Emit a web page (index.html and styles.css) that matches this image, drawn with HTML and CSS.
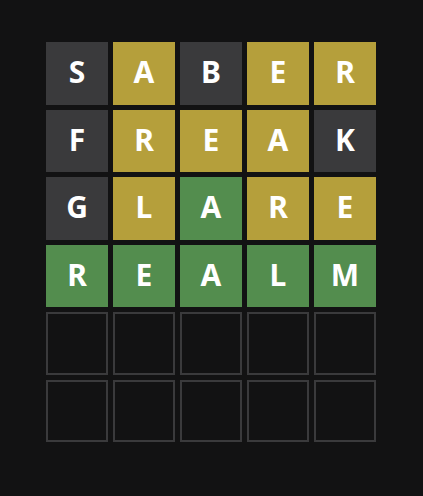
FILE: index.html
```html
<!DOCTYPE html>
<html lang="en">
<head>
<meta charset="utf-8">
<title>Wordle</title>
<link rel="stylesheet" href="styles.css">
</head>
<body>
<main class="board">
  <div class="tile absent">S</div>
  <div class="tile present">A</div>
  <div class="tile absent">B</div>
  <div class="tile present">E</div>
  <div class="tile present">R</div>

  <div class="tile absent">F</div>
  <div class="tile present">R</div>
  <div class="tile present">E</div>
  <div class="tile present">A</div>
  <div class="tile absent">K</div>

  <div class="tile absent">G</div>
  <div class="tile present">L</div>
  <div class="tile correct">A</div>
  <div class="tile present">R</div>
  <div class="tile present">E</div>

  <div class="tile correct">R</div>
  <div class="tile correct">E</div>
  <div class="tile correct">A</div>
  <div class="tile correct">L</div>
  <div class="tile correct">M</div>

  <div class="tile empty"></div>
  <div class="tile empty"></div>
  <div class="tile empty"></div>
  <div class="tile empty"></div>
  <div class="tile empty"></div>

  <div class="tile empty"></div>
  <div class="tile empty"></div>
  <div class="tile empty"></div>
  <div class="tile empty"></div>
  <div class="tile empty"></div>
</main>
</body>
</html>
```
FILE: styles.css
```css
html, body {
  margin: 0;
  padding: 0;
  background: #121213;
}
body {
  width: 423px;
  height: 496px;
  padding-top: 42px;
  padding-left: 46px;
  box-sizing: border-box;
  font-family: "Noto Sans", "DejaVu Sans", sans-serif;
}
.board {
  display: grid;
  grid-template-columns: repeat(5, 1fr);
  grid-template-rows: repeat(6, 1fr);
  gap: 5px;
  width: 330px;
  height: 400px;
}
.tile {
  display: flex;
  align-items: center;
  justify-content: center;
  padding-bottom: 2px;
  color: #ffffff;
  font-size: 30px;
  font-weight: bold;
  line-height: 1;
  text-transform: uppercase;
  box-sizing: border-box;
}
.absent { background: #3a3a3c; }
.present { background: #b59f3b; }
.correct { background: #538d4e; }
.empty { border: 2px solid #3a3a3c; }
```
